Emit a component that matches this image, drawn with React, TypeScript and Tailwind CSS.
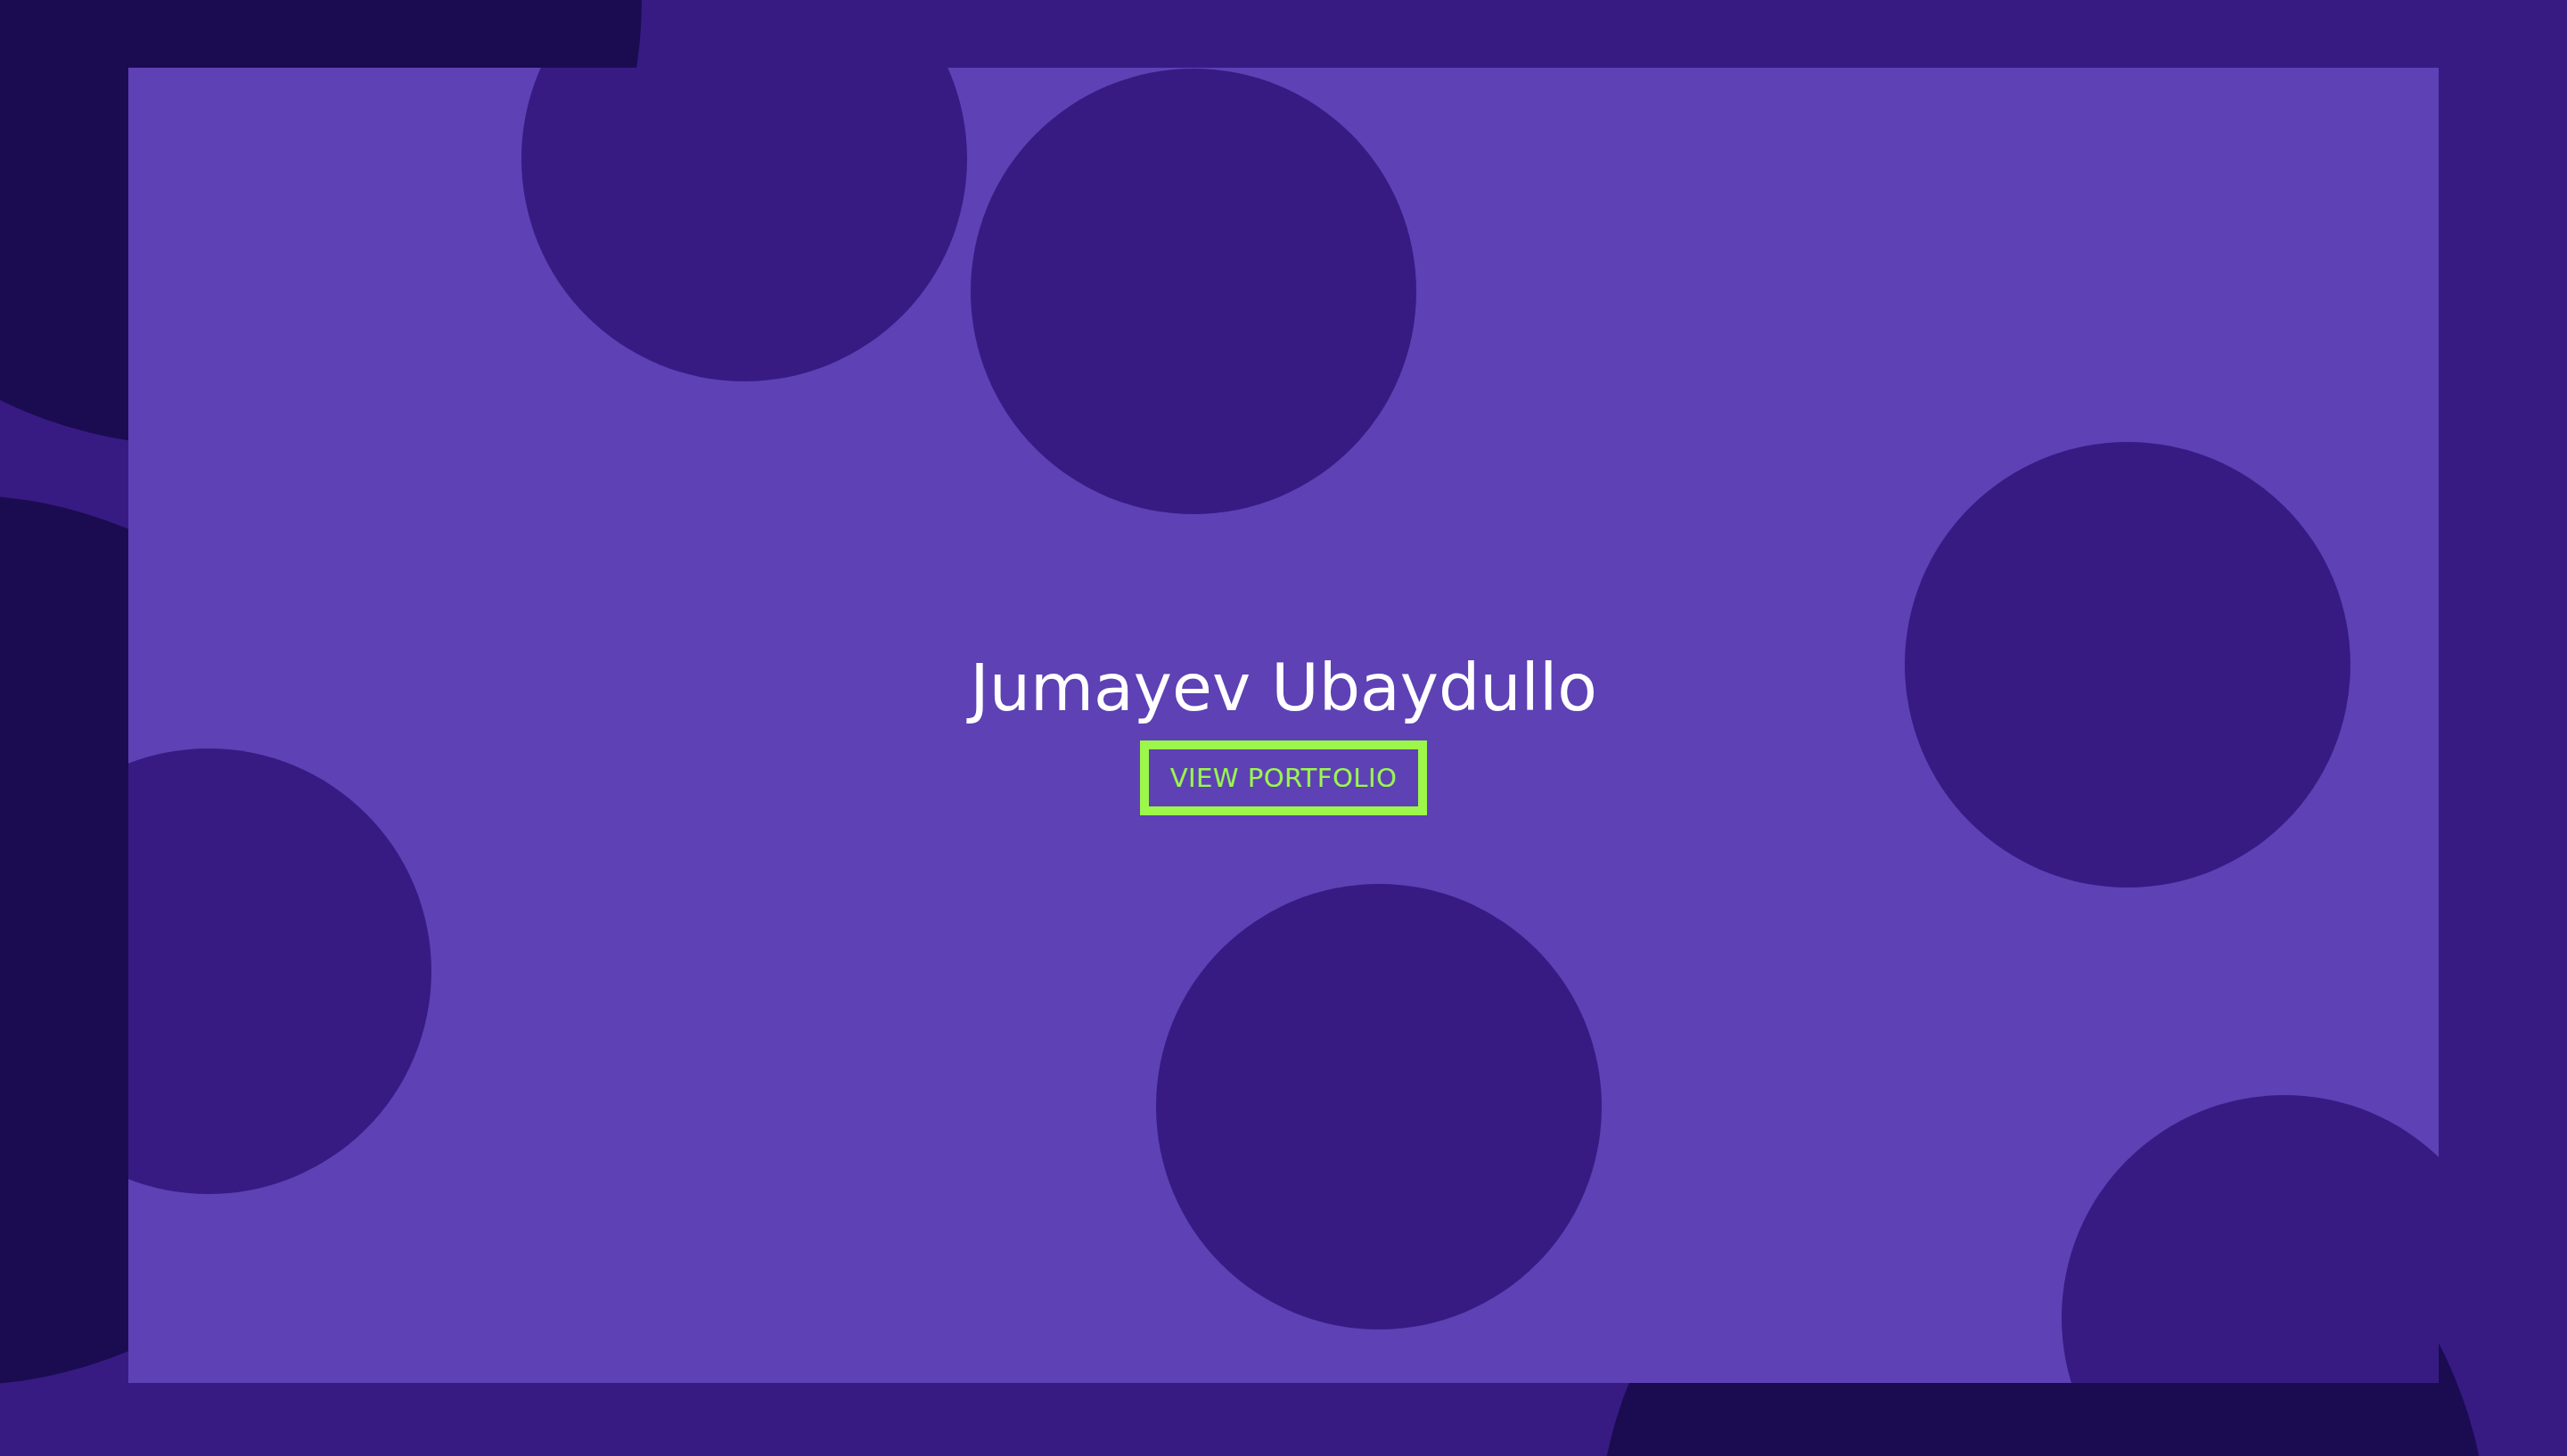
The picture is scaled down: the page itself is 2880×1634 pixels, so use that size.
const blobs = [
  // inside the card, clipped by it
  { key: 'a', cls: 'left-[441px] top-[-148px]' },
  { key: 'b', cls: 'left-[945px] top-[1px]' },
  { key: 'c', cls: 'left-[1993px] top-[420px]' },
  { key: 'd', cls: 'left-[-160px] top-[764px]' },
  { key: 'e', cls: 'left-[1153px] top-[916px]' },
  { key: 'f', cls: 'left-[2169px] top-[1153px]' },
];

const shadows = [
  // dark ones behind the card
  { key: 'x', cls: 'left-[-280px] top-[-500px]' },
  { key: 'y', cls: 'left-[-549px] top-[555px]' },
  { key: 'z', cls: 'left-[1792px] top-[1237px]' },
];

export default function App() {
  return (
    <div
      className="relative flex h-screen w-full flex-col overflow-hidden bg-[#371b83] px-[144px] pt-[76px] pb-[82px]"
      style={{ fontFamily: '"DejaVu Sans", "Liberation Sans", sans-serif' }}
    >
      {shadows.map((s) => (
        <div key={s.key} className={`absolute h-[1000px] w-[1000px] rounded-full bg-[#1b0c52] ${s.cls}`} />
      ))}

      <section className="relative z-10 flex flex-1 items-center justify-center overflow-hidden bg-[#5d41b5]">
        {blobs.map((b) => (
          <div key={b.key} className={`absolute h-[500px] w-[500px] rounded-full bg-[#371b83] ${b.cls}`} />
        ))}

        <div className="relative flex flex-col items-center pt-[15px]">
          <h1 className="text-[73px] font-normal leading-[88px] text-white">Jumayev Ubaydullo</h1>
          <a
            href="#portfolio"
            className="mt-[15px] border-[10px] border-[#9cf74a] px-[24px] text-[29px] uppercase leading-[64px] tracking-[0.5px] text-[#9cf74a]"
          >
            View Portfolio
          </a>
        </div>
      </section>
    </div>
  );
}
